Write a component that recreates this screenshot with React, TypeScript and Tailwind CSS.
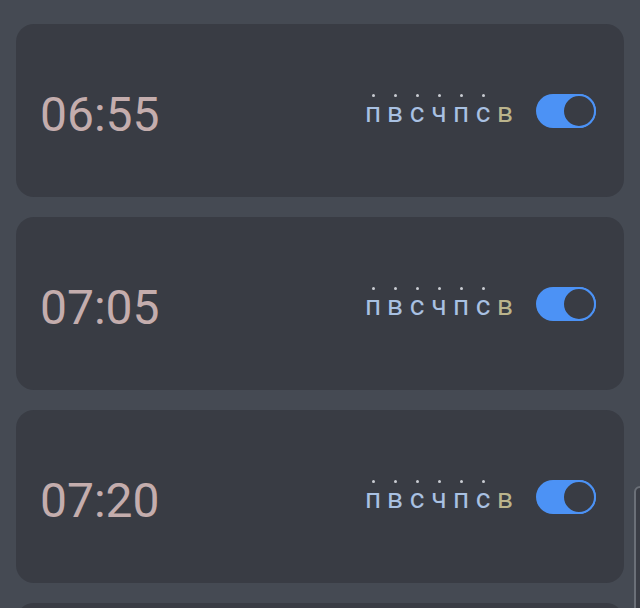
import React, { useState } from 'react';

type Alarm = { id: number; time: string; enabled: boolean };

const DAYS = ['п', 'в', 'с', 'ч', 'п', 'с', 'в'];
const ACTIVE = [true, true, true, true, true, true, false];

const initialAlarms: Alarm[] = [
  { id: 1, time: '06:55', enabled: true },
  { id: 2, time: '07:05', enabled: true },
  { id: 3, time: '07:20', enabled: true },
];

function Toggle({ on, onChange }: { on: boolean; onChange: () => void }) {
  return (
    <button
      type="button"
      onClick={onChange}
      className={`w-[60px] h-[34px] rounded-full flex items-center ${on ? 'bg-[#4c92f5] justify-end' : 'bg-[#5a5f68] justify-start'}`}
    >
      <span className="w-[34px] h-[34px] rounded-full bg-[#393c44] border-2 border-[#4c92f5]" />
    </button>
  );
}

export default function App() {
  const [alarms, setAlarms] = useState(initialAlarms);

  const toggle = (id: number) =>
    setAlarms((list) => list.map((a) => (a.id === id ? { ...a, enabled: !a.enabled } : a)));

  return (
    <div className="relative h-[608px] overflow-hidden bg-[#454a53] font-['Roboto',sans-serif]">
      <div className="flex flex-col gap-5 px-4 pt-6">
        {alarms.map((alarm) => (
          <div
            key={alarm.id}
            className="h-[173px] shrink-0 rounded-[18px] bg-[#393c44] flex items-center pl-6 pr-7"
          >
            <span className="pt-2 text-[48px] leading-none text-[#c4adad]">{alarm.time}</span>
            <div className="ml-auto flex items-center">
              {/* week days, dot marks the active ones */}
              <div className="flex items-center mr-[20px]">
                {DAYS.map((d, i) => (
                  <div key={i} className="w-[22px] flex flex-col items-center">
                    <span
                      className={`w-[3px] h-[3px] rounded-full ${ACTIVE[i] ? 'bg-[#c9ccd2]' : 'bg-transparent'}`}
                    />
                    <span
                      className={`mt-[2px] text-[28px] leading-[28px] ${ACTIVE[i] ? 'text-[#a9c1e2]' : 'text-[#bbb48c]'}`}
                    >
                      {d}
                    </span>
                  </div>
                ))}
              </div>
              <Toggle on={alarm.enabled} onChange={() => toggle(alarm.id)} />
            </div>
          </div>
        ))}
        {/* next card, only its top edge is in view */}
        <div className="h-[173px] shrink-0 rounded-[18px] bg-[#393c44]" />
      </div>
      {/* scroll indicator peeking on the right edge */}
      <div className="absolute left-[634px] top-[486px] w-[12px] h-[140px] rounded-lg border-2 border-[#6b7078] bg-[#3a3d45]" />
    </div>
  );
}
